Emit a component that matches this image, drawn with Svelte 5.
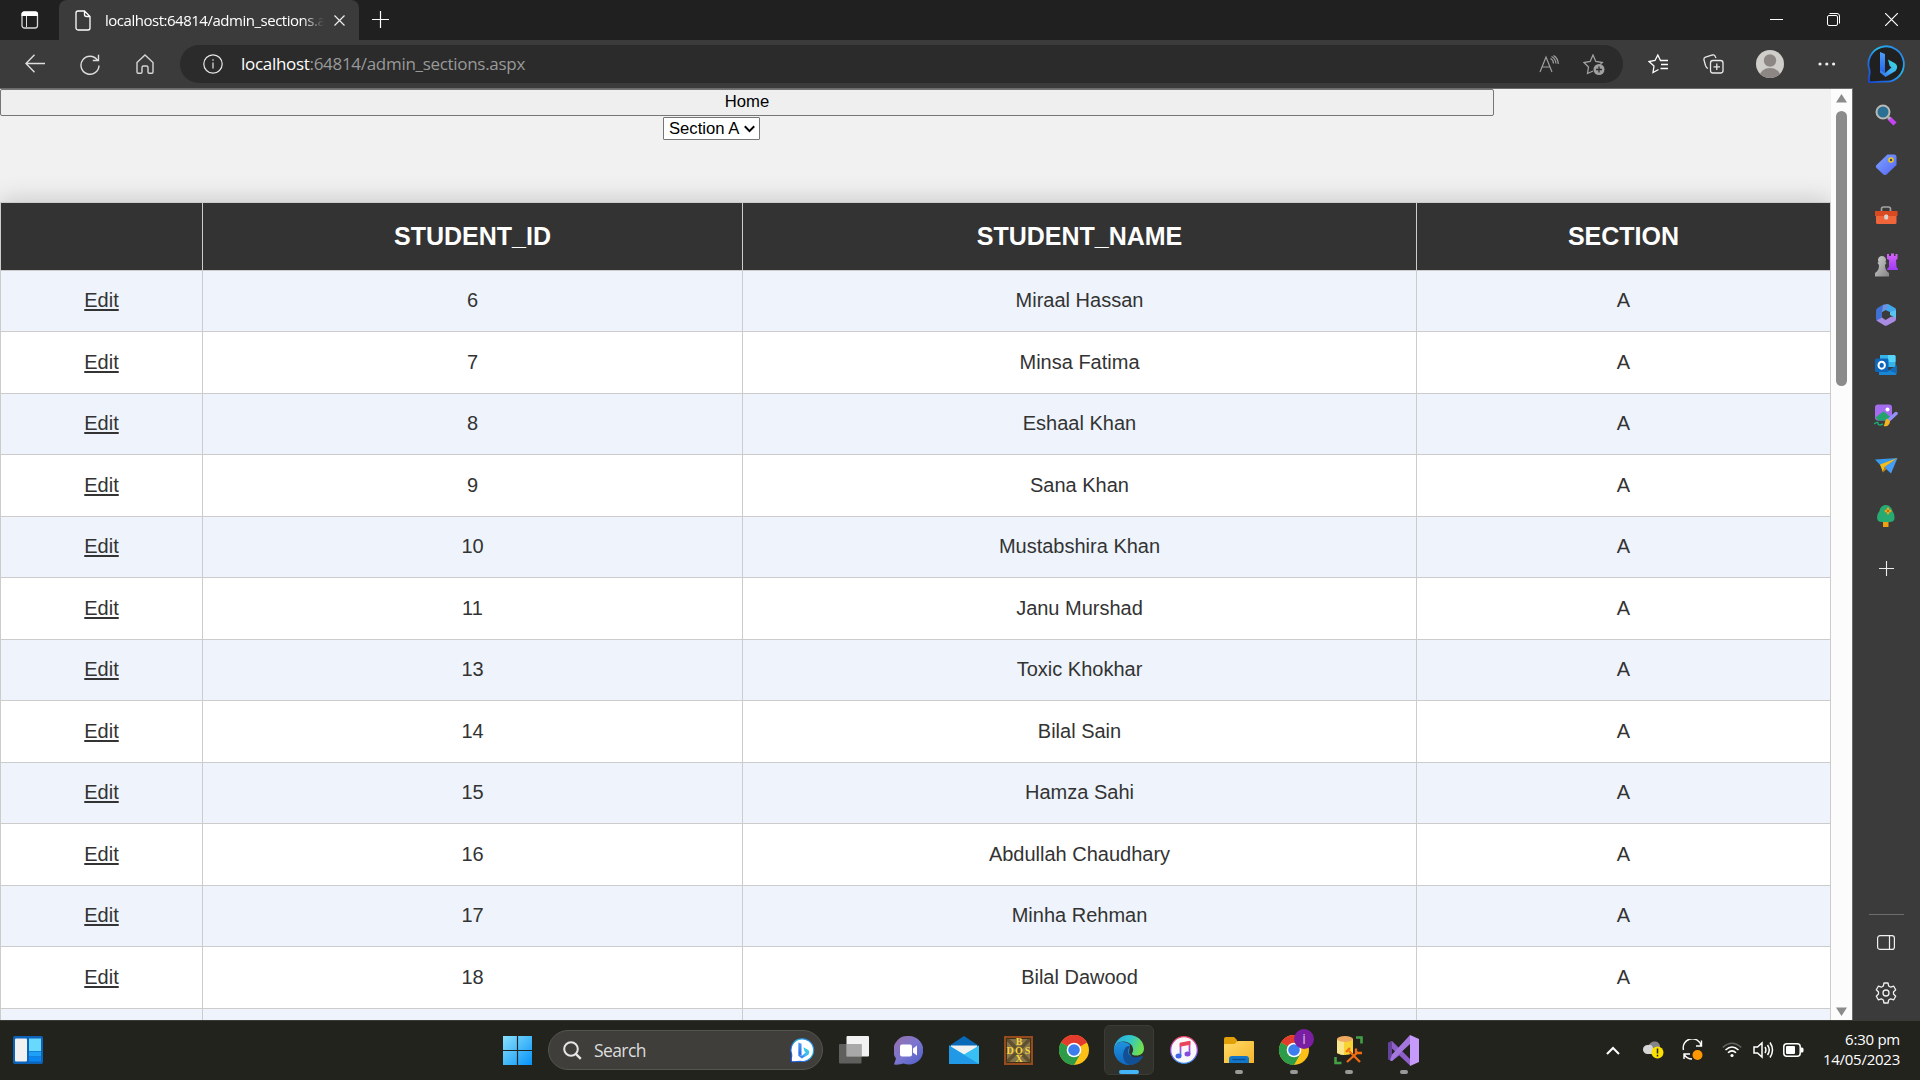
<script>
  const students = [
    [6, 'Miraal Hassan'], [7, 'Minsa Fatima'], [8, 'Eshaal Khan'], [9, 'Sana Khan'],
    [10, 'Mustabshira Khan'], [11, 'Janu Murshad'], [13, 'Toxic Khokhar'], [14, 'Bilal Sain'],
    [15, 'Hamza Sahi'], [16, 'Abdullah Chaudhary'], [17, 'Minha Rehman'], [18, 'Bilal Dawood']
  ];
</script>

{#snippet bing(fill)}
  <path d="M2 37V31Q3 29 2.500 25A17.700 17.700 0 1 1 19.500 36.700C13 36 9 37.500 2 37Z" {fill} stroke="url(#ring)" stroke-width="1.800" />
  <path d="M13 7l5 2v19l-5-2.500z" fill="url(#bingA)" />
  <path d="M21 14.500l6.500 3.500c3 1.500 3.500 5 1 8L18.500 32 13 27.500V25l5 3 6.500-5.500-1.800-1.500z" fill="url(#bingB)" />
{/snippet}

{#snippet chrome()}
  <circle cx="15" cy="15" r="15" fill="#fbc116" />
  <path d="M15 15L2 7.500A15 15 0 0 1 28 7.500z" fill="#e33b2e" />
  <path d="M15 0A15 15 0 0 1 28 7.500H15z" fill="#e33b2e" />
  <path d="M2 7.500A15 15 0 0 0 15 30L21.500 18.700 15 15z" fill="#2c9c48" />
  <circle cx="15" cy="15" r="7.300" fill="#fff" />
  <circle cx="15" cy="15" r="5.800" fill="#3b7ded" />
{/snippet}

<svg class="defs" width="0" height="0" aria-hidden="true">
  <defs>
    <linearGradient id="ring" x1="0" y1="1" x2="1" y2="0"><stop offset="0" stop-color="#1746d1" /><stop offset=".35" stop-color="#2379e8" /><stop offset=".6" stop-color="#25b9e8" /><stop offset="1" stop-color="#286be8" /></linearGradient>
    <linearGradient id="bingA" x1="0" y1="0" x2="0" y2="1"><stop offset="0" stop-color="#4ca0f7" /><stop offset="1" stop-color="#2463ec" /></linearGradient>
    <linearGradient id="bingB" x1="1" y1="0" x2="0" y2="1"><stop offset="0" stop-color="#30dfd0" /><stop offset=".5" stop-color="#42b4f6" /><stop offset="1" stop-color="#2f65e8" /></linearGradient>
    <linearGradient id="tag" x1="0" y1="0" x2="1" y2="1"><stop offset="0" stop-color="#7ca5ff" /><stop offset="1" stop-color="#5865f5" /></linearGradient>
    <linearGradient id="win" gradientUnits="userSpaceOnUse" x1="0" y1="0" x2="29" y2="29"><stop offset="0" stop-color="#8ae0fc" /><stop offset="1" stop-color="#0593f8" /></linearGradient>
    <linearGradient id="chat" x1="0" y1="0" x2="1" y2="1"><stop offset="0" stop-color="#9a6fa6" /><stop offset=".5" stop-color="#7b76d0" /><stop offset="1" stop-color="#4c5ec8" /></linearGradient>
    <linearGradient id="rook" x1="0" y1="0" x2="0" y2="1"><stop offset="0" stop-color="#d764f8" /><stop offset="1" stop-color="#9d3cf2" /></linearGradient>
    <linearGradient id="pawn" x1="0" y1="0" x2="1" y2="1"><stop offset="0" stop-color="#d0d0d0" /><stop offset="1" stop-color="#858585" /></linearGradient>
    <linearGradient id="edge" x1="0" y1="0" x2="1" y2=".3"><stop offset="0" stop-color="#29a6e8" /><stop offset=".55" stop-color="#30c6cd" /><stop offset="1" stop-color="#6ddf52" /></linearGradient>
    <linearGradient id="edgeLeft" x1="0" y1="0" x2="0" y2="1"><stop offset="0" stop-color="#1f92e0" /><stop offset="1" stop-color="#1069bd" /></linearGradient>
    <linearGradient id="note" x1="0" y1="0" x2="0" y2="1"><stop offset="0" stop-color="#ee4565" /><stop offset=".5" stop-color="#a54bdc" /><stop offset="1" stop-color="#2a8cf0" /></linearGradient>
    <linearGradient id="folder" x1="0" y1="0" x2="1" y2="1"><stop offset="0" stop-color="#ffdb66" /><stop offset="1" stop-color="#f6b42a" /></linearGradient>
  </defs>
</svg>

<div class="desktop">
  <header class="tabs">
    <span class="cell actions"><svg width="18" height="18" viewBox="0 0 18 18"><rect x="1" y="1" width="15.500" height="16" rx="2.500" fill="none" stroke="#d8d8d8" stroke-width="1.300" /><path d="M.5 5V3A2.500 2.500 0 0 1 3 .5h11.500A2.500 2.500 0 0 1 17 3v2z" fill="#fff" /><path d="M5.500 5v11" stroke="#ddd" /></svg></span>
    <div class="tab">
      <svg width="16" height="21" viewBox="0 0 16 21" fill="none" stroke="#fff" stroke-width="1.300"><path d="M3 1h6.500L15 6.500V18a2 2 0 0 1-2 2H3a2 2 0 0 1-2-2V3a2 2 0 0 1 2-2zM9.500 1v3.500a2 2 0 0 0 2 2H15" /></svg>
      <span class="title">localhost:64814/admin_sections.a</span>
      <svg width="11" height="11" viewBox="0 0 11 11" stroke="#eee" stroke-width="1.200"><path d="M.5.5l10 10M10.500.5l-10 10" /></svg>
    </div>
    <span class="cell newtab"><svg width="17" height="17" viewBox="0 0 17 17" stroke="#fff" stroke-width="1.200"><path d="M8.500 0v17M0 8.500h17" /></svg></span>
    <span class="grow"></span>
    <span class="cell ctl"><svg width="13" height="13"><path d="M0 6.500h13" stroke="#fff" /></svg></span>
    <span class="cell ctl"><svg width="13" height="13" viewBox="0 0 13 13" fill="none" stroke="#fff"><rect x=".5" y="2.500" width="10" height="10" rx="1.500" /><path d="M2.500.5H10A2.500 2.500 0 0 1 12.500 3v7.500" /></svg></span>
    <span class="cell ctl"><svg width="13" height="13" viewBox="0 0 13 13" stroke="#fff" stroke-width="1.200"><path d="M0 0l13 13M13 0L0 13" /></svg></span>
  </header>

  <div class="toolbar">
    <span class="cell nav back"><svg width="20" height="20" viewBox="0 0 20 20" fill="none" stroke="#dedede" stroke-width="1.400"><path d="M20 9.500H1M9.500.8L1 9.500l8.500 8.700" /></svg></span>
    <span class="cell nav"><svg width="20" height="21" viewBox="0 0 20 21" fill="none" stroke="#dedede" stroke-width="1.400"><path d="M17.300 6A9 9 0 1 0 19 11.500M18.500.8v5.700h-5.700" /></svg></span>
    <span class="cell nav"><svg width="18" height="20" viewBox="0 0 18 20" fill="none" stroke="#d6d6d6" stroke-width="1.400"><path d="M1 8.500L9 1l8 7.500V18a1.200 1.200 0 0 1-1.200 1.200h-2.600A1.200 1.200 0 0 1 12 18v-4.500a1.500 1.500 0 0 0-1.500-1.500h-3A1.500 1.500 0 0 0 6 13.500V18a1.200 1.200 0 0 1-1.200 1.200H2.200A1.200 1.200 0 0 1 1 18z" /></svg></span>
    <div class="address">
      <svg width="20" height="20" viewBox="0 0 20 20" fill="none" stroke="#e6e6e6" stroke-width="1.200"><circle cx="10" cy="10" r="9.200" /><path d="M10 8.500v6M10 5.300v1.500" /></svg>
      <span class="url"><b>localhost</b>:64814/admin_sections.aspx</span>
      <svg class="read" width="20" height="18" viewBox="0 0 20 18" fill="none" stroke="#a0a0a0" stroke-width="1.200"><path d="M1 17L7 2l6 15M3 12h8M11.500 3.500q3 1.500 3 5M12.500 1.500q4 2 4.500 7M14.500.5Q19 3 19.300 9" /></svg>
      <svg width="22" height="21" viewBox="0 0 22 21" fill="none" stroke="#a0a0a0" stroke-width="1.300"><path d="M10 17l-5.500 2.500 1-6.500L1 8.500l6.200-1L10 1l2.800 6.500 6.500 1-2 2" /><circle cx="16" cy="15.500" r="5.500" fill="#a0a0a0" stroke="none" /><path d="M16 12.500v6M13 15.500h6" stroke="#2b2b2b" /></svg>
    </div>
    <span class="cell fav"><svg width="20" height="20" viewBox="0 0 20 20" fill="none" stroke="#fff" stroke-width="1.300"><path d="M10.500 15.500L5 18.500l1-6.500-5-4.500 6-1L9.800 1l2.700 5.500H20M13 10.500h7M12.500 14.500H20" /></svg></span>
    <span class="cell coll"><svg width="21" height="20" viewBox="0 0 21 20" fill="none" stroke="#e8e8e8" stroke-width="1.300"><rect x="7.500" y="6.500" width="12.500" height="12.500" rx="2.500" /><path d="M13.800 9.500v6.500M10.500 12.800H17M5 14.500C3.500 14 3 13 2.500 11.500L1 6q-.5-2 1.500-2.800L9.500 1q2-.5 2.800 1.500l.7 1.500" /></svg></span>
    <span class="cell ava"><svg width="28" height="28" viewBox="0 0 28 28"><clipPath id="av"><circle cx="14" cy="14" r="14" /></clipPath><g clip-path="url(#av)"><path d="M0 0h28v28H0z" fill="#d0cecb" /><circle cx="14" cy="10.500" r="6.200" fill="#8c8784" /><ellipse cx="14" cy="26.500" rx="10.500" ry="8.500" fill="#8c8784" /></g></svg></span>
    <span class="cell dots"><svg width="18" height="4" fill="#eee"><circle cx="2" cy="2" r="1.600" /><circle cx="8.800" cy="2" r="1.600" /><circle cx="15.600" cy="2" r="1.600" /></svg></span>
    <span class="cell chatbtn"><svg width="39" height="39" viewBox="0 0 39 39">{@render bing('#202020')}</svg></span>
  </div>

  <div class="middle">
    <main class="page">
      <button class="home">Home</button>
      <div class="filter">
        <div class="select">Section A<svg width="11" height="8" viewBox="0 0 11 8" fill="none" stroke="#000" stroke-width="2"><path d="M.8 1.200l4.700 4.900 4.700-4.900" /></svg></div>
      </div>
      <div class="table">
        <div class="row head"><span></span><span>STUDENT_ID</span><span>STUDENT_NAME</span><span>SECTION</span></div>
        {#each students as [id, name]}
          <div class="row"><span><u>Edit</u></span><span>{id}</span><span>{name}</span><span>A</span></div>
        {/each}
        <div class="row"><span></span><span></span><span></span><span></span></div>
      </div>
    </main>

    <div class="scroll">
      <svg width="11" height="9"><path d="M5.500 0L11 8.500H0z" fill="#8b8b8b" /></svg>
      <div class="thumb"></div>
      <span class="grow"></span>
      <svg width="11" height="9"><path d="M5.500 9L11 .5H0z" fill="#8b8b8b" /></svg>
    </div>

    <aside class="sidebar">
      <span><svg width="22" height="22" viewBox="0 0 22 22"><path d="M14 14l6 6" stroke="#c543f5" stroke-width="4.500" /><path d="M13 13l2 2" stroke="#aaa" stroke-width="3" /><circle cx="8" cy="8" r="6.500" fill="#2b6f94" stroke="#b9b9b6" stroke-width="2" /></svg></span>
      <span><svg width="22" height="22" viewBox="0 0 22 22"><path d="M12.500.5H19a2.500 2.500 0 0 1 2.500 2.500v8L11.500 20.500q-1.500 1-3 0L1.500 14q-1.500-1.500 0-3z" fill="url(#tag)" /><circle cx="16" cy="6" r="2" fill="#35426b" stroke="#f5ca13" stroke-width="1.500" /></svg></span>
      <span><svg width="24" height="18" viewBox="0 0 24 18"><path d="M7.500 5V3a2 2 0 0 1 2-2h5a2 2 0 0 1 2 2v2" fill="none" stroke="#a5a5a5" stroke-width="1.600" /><rect x="2" y="5" width="20.500" height="13" rx="1.500" fill="#f0653a" /><path d="M1 5h22.500v5H1z" fill="#da4a22" /><rect x="10.200" y="8.500" width="4" height="5" rx="1.500" fill="#d8d4d0" /></svg></span>
      <span><svg width="24" height="24" viewBox="0 0 24 24"><path d="M13 1h2v2h2V.5h3V3h1.500V1h2v5l-1.500 1 .5 7 1.500 2v1H13v-1l2-2V7l-2-1z" fill="url(#rook)" /><path d="M8 3a4 4 0 0 1 3.500 6l1 1-1.500 2c0 4 1 6 4 8v3.500H1V20c3-2 4-4 4-8L3.500 10l1-1A4 4 0 0 1 8 3z" fill="url(#pawn)" /></svg></span>
      <span><svg width="22" height="22" viewBox="0 0 22 22"><path d="M8 1.500L13 0l7 4q1 .5 1 2v7l-6-2.500V8L10.500 6 7 8z" fill="#3fa9ec" /><path d="M1 7q0-2 1.500-3L8 .8 12 4 7 8v6l3.500 7.500L2 17q-1-1-1-2z" fill="#3f70d2" /><path d="M8 .8L13 0l-1 5-5 3-1 7z" fill="#6d92de" /><path d="M1.500 16.500l5.500-3 3.500 2.500 5-3 5.500-1v3q0 1.500-1.500 2.500L12 21.500q-1 .5-2.500 0z" fill="#a98be2" /><path d="M21 6v8l-6-3V8z" fill="#59c4ed" /></svg></span>
      <span><svg width="22" height="21" viewBox="0 0 22 21"><path d="M5 0h14a1.500 1.500 0 0 1 1.500 1.500V12H5z" fill="#36b3e8" /><path d="M13 0h6.500l1 1v6H13z" fill="#56d5fb" /><path d="M4 20h16a1.500 1.500 0 0 0 1.500-1.500v-8L13 16H4z" fill="#1987d6" /><path d="M14 15.500l7.500-5v8z" fill="#126abb" /><rect y="3.500" width="13.500" height="13.500" rx="1.500" fill="#0d66b9" /><ellipse cx="6.700" cy="10.200" rx="3.200" ry="3.500" fill="none" stroke="#fff" stroke-width="2" /></svg></span>
      <span><svg width="24" height="23" viewBox="0 0 24 23"><rect x="1" y=".5" width="17" height="16" rx="3" fill="#a66cf0" /><path d="M1.500 13.500L8.500 8q1-.5 2 0l7 6q-1 2.500-3 2.500H4z" fill="#24a36f" /><circle cx="13.500" cy="5.500" r="2" fill="#fff" /><path d="M15.500 15.500L22 9.500" stroke="#9292fa" stroke-width="3.500" stroke-linecap="round" /><path d="M13 14.500l3 2.500c0 4-3 6-6.500 5 2-2 .5-5 3.500-7.500z" fill="#f4b322" /><path d="M0 20q4-3 4-.5T9 20" fill="none" stroke="#1bad75" stroke-width="1.500" /></svg></span>
      <span><svg width="23" height="17" viewBox="0 0 23 17"><path d="M0 2.500L22.500 1 6 9z" fill="#3898ea" /><path d="M22.500 1L16 16.500 9 10z" fill="#479df5" /><path d="M22.500 1L5 7.500l3 8 1.500-5.500z" fill="#f4bd1c" /><path d="M9.500 10L8 15.500l3.500-3.500z" fill="#c88410" /></svg></span>
      <span><svg width="18" height="22" viewBox="0 0 18 22"><path d="M6 15h5.500v7H6z" fill="#eca012" /><path d="M9 0c4 0 6 4 6.500 6 2 3 2 5.500 2 7q0 4-5 4H5q-5 0-5-4.500Q.500 8 2.500 6C3 3 5 0 9 0z" fill="#28aa73" /><path d="M11 3.800v4.400M8.800 6h4.400" stroke="#f4a316" stroke-width="2.400" stroke-linecap="round" /><circle cx="11" cy="6" r="1" fill="#b25700" /></svg></span>
      <span class="add"><svg width="15" height="15" viewBox="0 0 15 15" stroke="#ededed" stroke-width="1.100"><path d="M7.500 0v15M0 7.500h15" /></svg></span>
      <i class="grow"></i>
      <hr />
      <span><svg width="18" height="15" viewBox="0 0 18 15" fill="none" stroke="#f0f0f0" stroke-width="1.200"><rect x=".6" y=".6" width="16.800" height="13.800" rx="2.500" /><path d="M12.500.5v14" /></svg></span>
      <span><svg width="22" height="22" viewBox="0 0 22 22" fill="none" stroke="#f0f0f0" stroke-width="1.300"><circle cx="11" cy="11" r="3" /><path d="M9 1h4l.7 3 2 1.200 3-1 2 3.500L18.500 10v2l2.200 2.300-2 3.500-3-1-2 1.200-.7 3H9l-.7-3-2-1.200-3 1-2-3.500L3.500 12v-2L1.300 7.700l2-3.500 3 1 2-1.200z" stroke-linejoin="round" /></svg></span>
    </aside>
  </div>

  <footer class="taskbar">
    <div class="side"><svg width="30" height="28" viewBox="0 0 30 28"><rect width="30" height="28" rx="2" fill="#0c63b8" /><rect x="2" y="2.500" width="12" height="23" rx="1" fill="#f1f1f1" /><path d="M16 2.500h12V15H16z" fill="#69d8fd" /><path d="M16 15.500h12v5H16z" fill="#1da1f6" /><path d="M16 21h12v4.500H16z" fill="#0b86f0" /></svg></div>
    <span class="app"><svg width="29" height="29" viewBox="0 0 29 29" fill="url(#win)"><path d="M0 0h13.900v13.900H0zM15.100 0H29v13.900H15.100zM0 15.100h13.900V29H0zM15.100 15.100H29V29H15.100z" /></svg></span>
    <div class="search">
      <svg width="19" height="19" viewBox="0 0 19 19" fill="none" stroke="#e6e6e6" stroke-width="2"><circle cx="8" cy="8" r="6.800" /><path d="M12.800 12.800l5 5" stroke-width="2.400" /></svg>
      <span>Search</span>
      <svg width="25" height="25" viewBox="0 0 39 39">{@render bing('#fff')}</svg>
    </div>
    <span class="app"><svg width="30" height="28" viewBox="0 0 30 28"><rect x="7.500" width="22.500" height="20.500" rx="1" fill="#f2f2f2" /><rect y="8" width="22.500" height="19.500" rx="1" fill="#6e6e6e" fill-opacity=".8" /><path d="M7.500 8h15v12.500h-15z" fill="#a8a8a8" /></svg></span>
    <span class="app"><svg width="29" height="29" viewBox="0 0 29 29"><path d="M14.500 0a14.300 14.300 0 1 1-5 27.500q-4 1.500-9.500 1l2-6A14.300 14.300 0 0 1 14.500 0z" fill="url(#chat)" /><rect x="6" y="8.500" width="12" height="12" rx="2" fill="#fff" /><path d="M19 12.500l4-3v10l-4-3z" fill="#fff" /></svg></span>
    <span class="app"><svg width="30" height="28" viewBox="0 0 30 28"><path d="M0 10L15 0l15 10-2 4H2z" fill="#0869b8" /><path d="M2 9.500h26v12H2z" fill="#f1f1f1" /><path d="M0 9.500L15 18.500 30 9.500V28H0z" fill="#36c0f3" /><path d="M0 9.500L30 28H0z" fill="#2199e6" /></svg></span>
    <span class="app"><svg width="29" height="29" viewBox="0 0 29 29"><path d="M1 1h27v27H1z" fill="#85754e" stroke="#994a1c" stroke-width="2" /><path d="M2.500 2.500l24 24M26.500 2.500l-24 24" stroke="#5f5130" stroke-width="3.500" /><path d="M2.500 2.500h24v24h-24z" fill="none" stroke="#3e3218" /><g font-family="Liberation Serif, serif" font-weight="700" fill="#f7d33a" font-size="10" text-anchor="middle"><text x="15" y="9">B</text><text x="6" y="17.500">D</text><text x="15" y="17.500">O</text><text x="23.500" y="17.500">S</text><text x="15" y="26">X</text></g></svg></span>
    <span class="app"><svg width="30" height="30" viewBox="0 0 30 30">{@render chrome()}</svg></span>
    <span class="app active"><svg width="30" height="30" viewBox="0 0 30 30"><path d="M0 13C3 5 13 6 16 10l-1 8 4 5 9 0Q23 30 15 30A15 15 0 0 1 0 13z" fill="url(#edgeLeft)" /><path d="M10.500 14.500c1-3 3.500-4 5.500-3.500-2 3-3.500 7 0 9.500 3 2.500 8 2.200 12 .3 1 .3 1 1 .5 1.700Q24 29.500 16 30C9 28 7.500 20 10.500 14.500z" fill="#124f94" /><path d="M0 14A15 15 0 0 1 15 0c9 0 15 6.500 15 13.500 0 5-4 7.500-9 7-3-.3-4-1.500-2.500-3C21 12 16 6.500 9.500 6.500S1 11 0 14z" fill="url(#edge)" /></svg></span>
    <span class="app"><svg width="28" height="28" viewBox="0 0 28 28"><circle cx="14" cy="14" r="13.300" fill="#f8f7fa" stroke="url(#note)" stroke-width="1.200" /><path d="M10.500 20V8l9-2v12" fill="none" stroke="url(#note)" stroke-width="1.700" /><path d="M9.800 6.800l10.500-2v4l-10.500 2z" fill="#e9465c" /><ellipse cx="8.500" cy="20" rx="3" ry="2.500" fill="#4065e8" /><ellipse cx="17.500" cy="18" rx="3" ry="2.500" fill="#864bdc" /></svg></span>
    <span class="app run"><svg width="30" height="28" viewBox="0 0 30 28"><path d="M0 3a2 2 0 0 1 2-2h8l3 3v6H0z" fill="#e2a008" /><path d="M0 9q0-1 1-1h9.500l3-3H29q1 0 1 1V27H0z" fill="url(#folder)" /><path d="M5 27v-4a3 3 0 0 1 3-3h14a3 3 0 0 1 3 3v4z" fill="#1277ca" /><path d="M8.500 23.500h13" stroke="#0b4f91" stroke-width="1.400" /></svg></span>
    <span class="app run"><svg width="36" height="36" viewBox="-3 -3 36 36">{@render chrome()}</svg><em>i</em></span>
    <span class="app run"><svg width="30" height="30" viewBox="0 0 30 30"><path d="M3 4v14q8 4 16 0V4z" fill="#f7d431" /><path d="M3 4v14q3 2 7 2V4z" fill="#f8e58c" /><ellipse cx="11" cy="4" rx="8" ry="3" fill="#efaa62" /><path d="M22 2.500h5.500v6M7.500 28H1.500v-6" fill="none" stroke="#43a047" stroke-width="2.600" /><path d="M13 27l11-10M15 16l11 11" stroke="#ef6c12" stroke-width="2.300" /><path d="M12 17l4-4M22 13.500v4.500h6" fill="none" stroke="#ef6c12" stroke-width="2.300" /></svg></span>
    <span class="app run"><svg width="31" height="31" viewBox="0 0 31 31"><path d="M0 8l4-2 19 19-1 5.500L4 13.500V20l5-4.500 4 3.500-9 7-4-2z" fill="#8e5fc9" /><path d="M0 8l4-2v20l-4-2z" fill="#65439a" /><path d="M22 0v9L8 22l-4 4-2-.5 2-6z" fill="#a477df" /><path d="M22 0l9 4v23l-9 4z" fill="#c69afa" /></svg></span>
    <span class="grow"></span>
    <span class="tray"><svg width="14" height="9" viewBox="0 0 14 9" fill="none" stroke="#fff" stroke-width="2"><path d="M1 8l6-6 6 6" /></svg></span>
    <span class="tray"><svg width="22" height="18" viewBox="0 0 22 18"><path d="M7 4q2-4 6-3.500 4 0 5 4.500l-1 6H7z" fill="#858585" /><path d="M5 13a4.500 4.500 0 1 1 1-9q4-1 5 3l2 6z" fill="#d6d6d6" /><circle cx="15.500" cy="11.500" r="6" fill="#fce100" /><path d="M15.500 7.500v5M15.500 13.800v1.700" stroke="#222" stroke-width="1.500" /></svg></span>
    <span class="tray"><svg width="22" height="22" viewBox="0 0 22 22" fill="none" stroke="#fff" stroke-width="1.400"><path d="M1.500 11A9 9 0 0 1 19 6.500M19.500 1.500v5.500H14M2 20v-5h6M2 15.500Q5 20 10 20" /><circle cx="15.500" cy="16" r="5" fill="#ff9800" stroke="none" /></svg></span>
    <span class="tray wifi"><svg width="20" height="16" viewBox="0 0 20 16" fill="none" stroke="#fff" stroke-width="1.600"><path d="M.8 5.500q9-8.500 18.400 0" stroke="#656560" /><path d="M3.500 8q6.500-6 13 0M6 10.800q4-4 8 0" /><circle cx="10" cy="13.500" r="1.600" fill="#fff" stroke="none" /></svg></span>
    <span class="tray net"><svg width="21" height="18" viewBox="0 0 21 18" fill="none" stroke="#fff" stroke-width="1.500"><path d="M1 6h3.500L9 2v14l-4.500-4H1zM12 6q1.800 3 0 6M14.500 4q3.500 5 0 10M17 1.500q5 7.500 0 15" /></svg></span>
    <span class="tray net"><svg width="21" height="14" viewBox="0 0 21 14"><rect x=".8" y=".8" width="16.400" height="12.400" rx="3" fill="none" stroke="#fff" stroke-width="1.500" /><rect x="3" y="3" width="9" height="8" rx="1" fill="#fff" /><path d="M18 4.500h1q1.500 0 1.500 1.500v2q0 1.500-1.500 1.500h-1z" fill="#fff" /></svg></span>
    <div class="clock"><span>6:30 pm</span><span>14/05/2023</span></div>
  </footer>
</div>

<style>
  :global(body) { margin: 0; overflow: hidden; }
  .defs { position: absolute; }
  svg { display: block; flex: none; }
  .desktop { width: 1920px; height: 1080px; display: flex; flex-direction: column; overflow: hidden; background: #3b3b3b; font-family: 'Open Sans', 'Noto Sans', sans-serif; }
  .grow { flex: 1; }
  .cell { display: flex; align-items: center; justify-content: center; flex: none; }

  .tabs { height: 40px; display: flex; background: #202020; flex: none; }
  .tabs .cell { height: 39px; }
  .actions { width: 59px; }
  .tab { width: 300px; flex: none; box-sizing: border-box; padding: 0 14px 0 16px; display: flex; align-items: center; background: #3b3b3b; border-radius: 8px 8px 0 0; color: #fff; font-size: 15px; }
  .title { width: 219px; margin: 0 10px 1px 14px; letter-spacing: -.480px; white-space: nowrap; mask-image: linear-gradient(90deg, #000 90%, transparent 100%); }
  .newtab { width: 43px; }
  .ctl { width: 57.500px; }

  .toolbar { height: 48px; display: flex; align-items: center; flex: none; }
  .nav { width: 55px; }
  .back { margin-left: 7px; }
  .address { margin-left: 8px; width: 1443px; flex: none; height: 38px; box-sizing: border-box; border-radius: 19px; background: #2b2b2b; padding: 0 18px 0 23px; display: flex; align-items: center; }
  .url { flex: 1; margin-left: 18px; font-size: 17px; letter-spacing: -.300px; color: #999; white-space: nowrap; padding-bottom: 1px; }
  .url b { color: #fff; font-weight: 400; }
  .read { margin-right: 24px; }
  .fav { width: 70px; }
  .coll { width: 40px; }
  .ava { width: 74px; }
  .dots { width: 40px; }
  .chatbtn { width: 73px; box-sizing: border-box; padding-left: 6px; }

  .middle { height: 932px; display: flex; flex: none; overflow: hidden; }
  .page { width: 1831px; height: 932px; box-sizing: border-box; border-top: 1px solid #6b6b6b; background: #f1f1f1; font-family: 'Liberation Sans', Arial, sans-serif; overflow: hidden; color: #333; }
  .home { display: block; width: 1494px; height: 27px; margin: 0; padding: 0; box-sizing: border-box; border: 1px solid #767676; border-radius: 2px; background: #efefef; font: 16.670px 'Liberation Sans', sans-serif; line-height: 22px; padding-bottom: 2px; color: #000; }
  .filter { height: 86px; padding: 1px 0 0 663px; box-sizing: border-box; }
  .select { width: 97px; height: 23px; box-sizing: border-box; border: 1px solid #767676; border-radius: 1px; background: #fff; display: flex; align-items: center; gap: 5px; padding-left: 5px; color: #000; font-size: 16.670px; white-space: nowrap; }
  .table { box-sizing: border-box; border: solid #ccc; border-width: 1px 0 0 1px; box-shadow: 0 0 25px rgba(0, 0, 0, .2); }
  .row { display: grid; grid-template-columns: 202px 540px 674px 414px; height: 61px; background: #eef3fc; font-size: 20px; }
  .row span { display: flex; align-items: center; justify-content: center; border: solid #ccc; border-width: 0 1px 1px 0; box-sizing: border-box; padding-bottom: 2px; }
  .row:nth-child(odd) { height: 62px; background: #fff; }
  .row:nth-child(odd) span { padding-bottom: 0; }
  .row.head { height: 68px; background: #333; color: #fff; font-weight: 700; font-size: 25px; }
  u { text-underline-offset: 2px; text-decoration-thickness: 2px; }

  .scroll { width: 21px; border: solid #6b6b6b; border-width: 1px 1px 0 0; background: #fcfcfc; display: flex; flex-direction: column; align-items: center; padding: 5px 0 4px; box-sizing: content-box; height: 922px; }
  .thumb { width: 11px; height: 275px; margin-top: 8px; border-radius: 6px; background: #8b8b8b; }
  .sidebar { flex: 1; display: flex; flex-direction: column; align-items: center; padding: 2px 1px 2px 0; box-sizing: border-box; }
  .sidebar > span { height: 50.100px; display: flex; align-items: center; justify-content: center; flex: none; }
  .sidebar .add { padding-top: 5px; box-sizing: border-box; }
  hr { width: 35px; height: 1px; border: 0; margin: 0 0 3px; background: #6d6d6d; }

  .taskbar { height: 60px; box-sizing: border-box; border-top: 1px solid #3a3a36; background: #23231e; display: flex; align-items: center; color: #fff; padding-bottom: 1px; }
  .side { width: 490px; padding-left: 13px; box-sizing: border-box; }
  .app { position: relative; width: 55px; height: 50px; display: flex; align-items: center; justify-content: center; flex: none; }
  .app.active { width: 50px; margin: 0 2.500px; box-sizing: border-box; background: #31312c; border: 1px solid #3b3b37; border-radius: 6px; }
  .app.active::after, .run::after { content: ''; position: absolute; bottom: 1px; left: 50%; width: 8px; height: 4px; margin-left: -4px; border-radius: 2px; background: #999; }
  .app.active::after { bottom: 0; width: 20px; margin-left: -10px; background: #43b6f9; }
  em { position: absolute; left: 28px; top: 4px; width: 20px; height: 20px; border-radius: 50%; background: #7b1fa2; color: #d9b8e6; font: 14px/19px 'Open Sans', sans-serif; text-align: center; }
  .search { width: 275px; height: 40px; margin: 0 3px; box-sizing: border-box; border: 1px solid #555550; border-radius: 20px; background: #3f3e3a; display: flex; align-items: center; padding: 0 7px 0 14px; }
  .search span { flex: 1; margin-left: 12px; font-size: 17.500px; letter-spacing: -.600px; color: #ddd; }
  .tray { width: 40px; display: flex; justify-content: center; flex: none; }
  .net { width: 30px; }
  .wifi { width: 35px; box-sizing: border-box; padding-left: 3px; }
  .clock { width: 112px; box-sizing: border-box; padding: 0 20px 3px 0; display: flex; flex-direction: column; align-items: flex-end; font-size: 15px; line-height: 20px; letter-spacing: -.25px; white-space: nowrap; }
</style>
